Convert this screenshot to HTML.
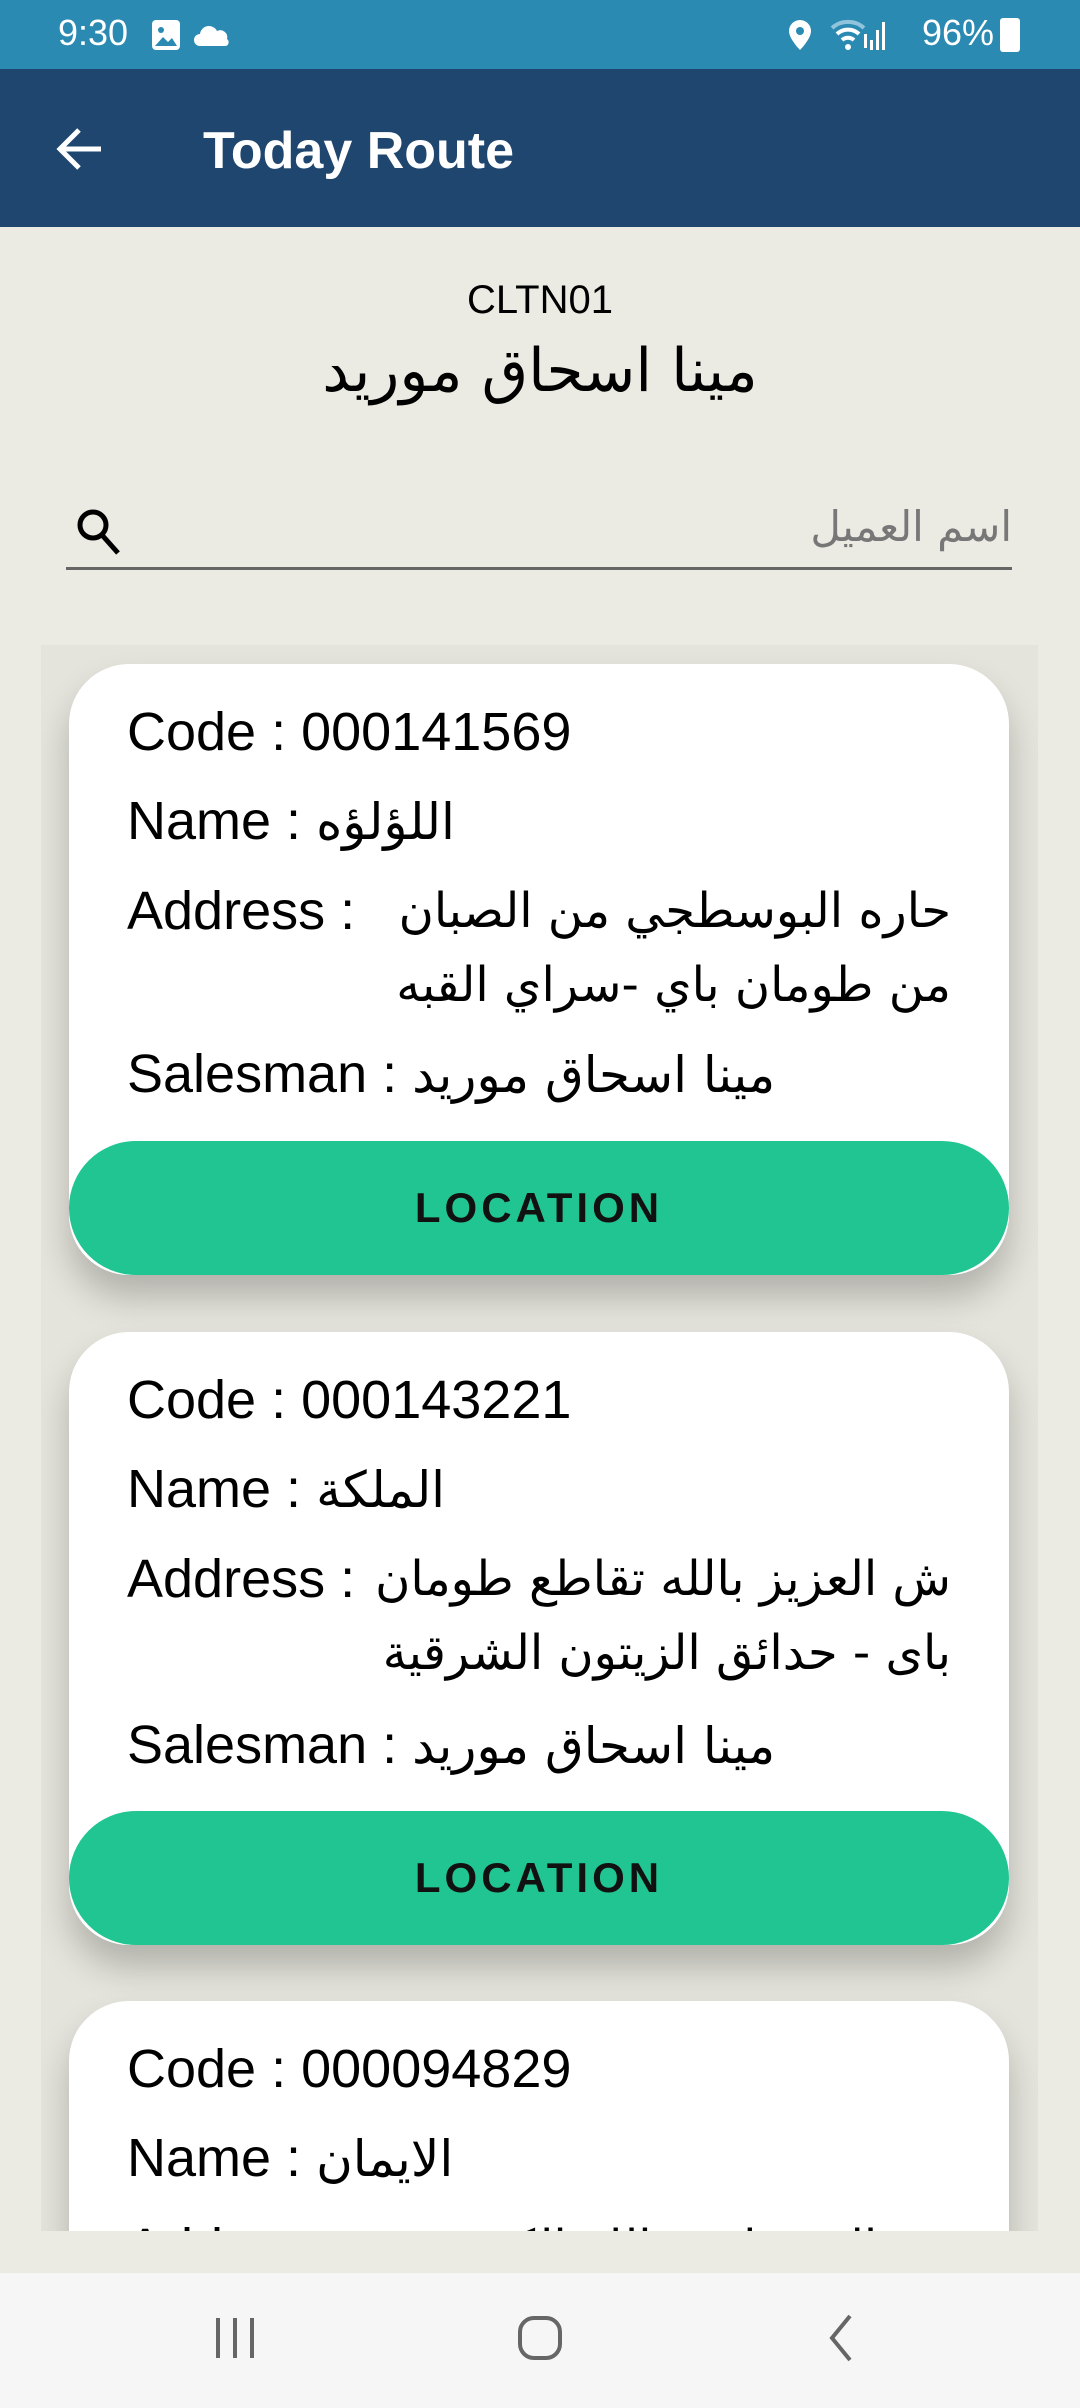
<!DOCTYPE html>
<html><head><meta charset="utf-8"><style>
*{margin:0;padding:0;box-sizing:border-box}
body{width:1080px;height:2408px;background:#ebebe3;font-family:"Liberation Sans","Noto Sans CJK SC",sans-serif;position:relative;overflow:hidden;color:#000}
.sb{position:absolute;left:0;top:0;width:1080px;height:69px;background:#2a8ab2;color:#fff;font-size:36px}
.ab{position:absolute;left:0;top:69px;width:1080px;height:158px;background:#1e466e;color:#fff}
.ab .t{position:absolute;left:203px;top:52px;font-size:52px;font-weight:bold}
.hdr1{position:absolute;top:278px;width:1080px;text-align:center;font-size:40px}
.hdr2{position:absolute;top:336px;width:1080px;text-align:center;font-size:60px;font-family:"DejaVu Sans",sans-serif}
.search{position:absolute;left:66px;top:500px;width:946px;height:70px;border-bottom:3px solid #666}
.ph{position:absolute;right:0;top:2px;font-size:42px;color:#777;font-family:"DejaVu Sans",sans-serif}
.list{position:absolute;left:41px;top:645px;width:997px;height:1586px;overflow:hidden;background:#e4e4dc}
.card{position:absolute;left:28px;width:940px;background:#fff;border-radius:60px;box-shadow:0 22px 34px rgba(0,0,0,.22)}
.ln{position:absolute;left:58px;font-size:54px;white-space:nowrap}
.ar{font-family:"DejaVu Sans",sans-serif;font-size:50px}
.addr{position:absolute;right:58px;width:590px;text-align:right;direction:rtl;font-family:"DejaVu Sans",sans-serif;font-size:48px;line-height:74px}
.btn{position:absolute;left:0;width:940px;height:134px;border-radius:67px;background:#20c592;text-align:center;line-height:134px;font-size:42px;letter-spacing:4px;font-weight:bold;color:#111}
.nav{position:absolute;left:0;top:2273px;width:1080px;height:135px;background:#f6f6f6}
</style></head><body>
<div class="sb">
 <div style="position:absolute;left:58px;top:12px">9:30</div>
 <svg style="position:absolute;left:150px;top:18px" width="32" height="34" viewBox="0 0 32 34"><rect x="2" y="2" width="28" height="30" rx="4" fill="#fff"/><circle cx="11" cy="12" r="3" fill="#2a8ab2"/><path d="M5 28l8-9 5 5 4-4 5 8z" fill="#2a8ab2"/></svg>
 <svg style="position:absolute;left:194px;top:22px" width="38" height="24" viewBox="0 0 38 24"><path d="M6 24a6 6 0 010-12 9 9 0 0117-3 7 7 0 0110 8 4 4 0 01-1 7z" fill="#fff"/></svg>
 <svg style="position:absolute;left:787px;top:18px" width="26" height="34" viewBox="0 0 26 34"><path d="M13 2a11 11 0 0111 11c0 8-11 19-11 19S2 21 2 13A11 11 0 0113 2z" fill="#fff"/><circle cx="13" cy="13" r="4" fill="#2a8ab2"/></svg>
 <svg style="position:absolute;left:830px;top:18px" width="60" height="34" viewBox="0 0 60 34"><path d="M2 10a24 24 0 0132 0" stroke="#8fc4dc" stroke-width="4" fill="none"/><path d="M7 16a16 16 0 0122 0M12 22a9 9 0 0112 0" stroke="#fff" stroke-width="4" fill="none"/><circle cx="18" cy="29" r="3" fill="#fff"/><rect x="34" y="16" width="3" height="14" fill="#fff"/><rect x="40" y="22" width="3" height="10" fill="#fff"/><rect x="46" y="12" width="3" height="20" fill="#fff"/><rect x="52" y="4" width="3" height="28" fill="#fff"/></svg>
 <div style="position:absolute;left:922px;top:12px">96%</div>
 <div style="position:absolute;left:1000px;top:18px;width:20px;height:34px;background:#fff;border-radius:3px"></div>
</div>
<div class="ab">
 <svg style="position:absolute;left:55px;top:57px" width="50" height="46" viewBox="0 0 50 46"><path d="M46 23H5M24 4L5 23l19 19" stroke="#fff" stroke-width="5" fill="none"/></svg>
 <div class="t">Today Route</div>
</div>
<div class="hdr1">CLTN01</div>
<div class="hdr2">مينا اسحاق موريد</div>
<div class="search">
 <svg style="position:absolute;left:8px;top:6px" width="50" height="52" viewBox="0 0 50 52"><circle cx="19" cy="19" r="13" stroke="#000" stroke-width="5" fill="none"/><path d="M28 29l16 18" stroke="#000" stroke-width="5"/></svg>
 <div class="ph">اسم العميل</div>
</div>
<div class="list">
 <div class="card" style="top:19px;height:611px">
  <div class="ln" style="top:37px">Code : 000141569</div>
  <div class="ln" style="top:126px">Name : <span class="ar">اللؤلؤه</span></div>
  <div class="ln" style="top:216px">Address :</div>
  <div class="addr" style="top:210px">حاره البوسطجي من الصبان من طومان باي -سراي القبه</div>
  <div class="ln" style="top:379px">Salesman : <span class="ar">مينا اسحاق موريد</span></div>
  <div class="btn" style="top:477px">LOCATION</div>
 </div>
 <div class="card" style="top:687px;height:613px">
  <div class="ln" style="top:37px">Code : 000143221</div>
  <div class="ln" style="top:126px">Name : <span class="ar">الملكة</span></div>
  <div class="ln" style="top:216px">Address :</div>
  <div class="addr" style="top:210px">ش العزيز بالله تقاطع طومان باى - حدائق الزيتون الشرقية</div>
  <div class="ln" style="top:382px">Salesman : <span class="ar">مينا اسحاق موريد</span></div>
  <div class="btn" style="top:479px">LOCATION</div>
 </div>
 <div class="card" style="top:1356px;height:600px">
  <div class="ln" style="top:37px">Code : 000094829</div>
  <div class="ln" style="top:126px">Name : <span class="ar">الايمان</span></div>
  <div class="ln" style="top:216px">Address :</div>
  <div class="addr" style="top:210px">ش المعز لدين الله الكبير متفرع</div>
 </div>
</div>
<div class="nav">
 <svg style="position:absolute;left:210px;top:40px" width="50" height="50" viewBox="0 0 50 50"><path d="M8 5v40M25 5v40M42 5v40" stroke="#666" stroke-width="4"/></svg>
 <svg style="position:absolute;left:515px;top:40px" width="50" height="50" viewBox="0 0 50 50"><rect x="5" y="5" width="40" height="40" rx="14" stroke="#666" stroke-width="4" fill="none"/></svg>
 <svg style="position:absolute;left:820px;top:40px" width="40" height="50" viewBox="0 0 40 50"><path d="M30 3L12 25l18 22" stroke="#666" stroke-width="4" fill="none"/></svg>
</div>
</body></html>
